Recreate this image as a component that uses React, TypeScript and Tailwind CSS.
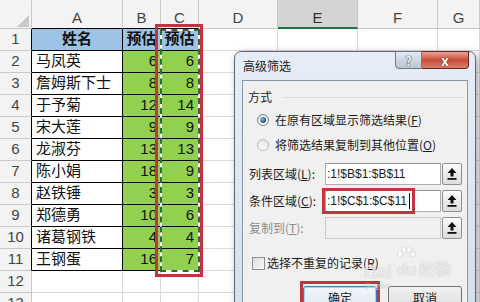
import React from "react";

const names = ["马凤英", "詹姆斯下士", "于予菊", "宋大莲", "龙淑芬", "陈小娟", "赵铁锤", "郑德勇", "诸葛钢铁", "王钢蛋"];
const colB = [6, 8, 12, 9, 13, 18, 3, 10, 4, 16];
const colC = [6, 8, 14, 9, 13, 9, 3, 6, 4, 7];
const letters = ["A", "B", "C", "D", "E", "F", "G"];

const grid = "border-r border-b border-[#dadada] bg-white";
const boxed = "border-r border-b border-black";

function UpButton() {
  return (
    <div className="ml-[1px] flex h-[22px] w-[20px] items-center justify-center rounded-[2px] border border-[#8e8f8f] bg-gradient-to-b from-[#fbfbfb] to-[#dcdcdc]">
      <svg width="10" height="12" viewBox="0 0 10 12">
        <path d="M5 0 L9.5 5 H6.5 V8.5 H3.5 V5 H0.5 Z" fill="#111" />
        <rect x="0.5" y="10" width="9" height="1.8" fill="#111" />
      </svg>
    </div>
  );
}

function Radio({ on }: { on?: boolean }) {
  return (
    <div
      className={
        on
          ? "flex h-[12px] w-[12px] items-center justify-center rounded-full border border-[#7a8088] bg-gradient-to-b from-[#e8e8e8] to-[#fafafa]"
          : "h-[12px] w-[12px] rounded-full border border-[#b5b9be] bg-gradient-to-b from-[#e6e6e6] to-[#fbfbfb]"
      }
    >
      {on && <div className="h-[6px] w-[6px] rounded-full bg-[radial-gradient(circle_at_35%_35%,#8fc0e8,#1f4e7e_70%)]" />}
    </div>
  );
}

export default function App() {
  return (
    <div className="relative h-[302px] w-[480px] overflow-hidden bg-white font-['Liberation_Sans','Noto_Sans_CJK_SC',sans-serif]">
      {/* sheet */}
      <div className="grid grid-cols-[32px_91px_38px_38px_79px_80px_80px_42px] grid-rows-[29px_repeat(13,22px)] text-[15px] text-[#111]">
        <div className="relative border-r border-b border-[#c8c8c8] bg-[#f3f3f3]">
          <svg className="absolute left-[17px] top-[15px]" width="12" height="12" viewBox="0 0 12 12">
            <path d="M12 0 V12 H0 Z" fill="#c9c9c9" />
          </svg>
        </div>
        {letters.map((l) =>
          l === "E" ? (
            <div key={l} className="flex items-end justify-center border-r border-b-2 border-r-[#c8c8c8] border-b-[#217346] bg-[#d4d4d4] pb-[2px] leading-none text-[#333]">
              {l}
            </div>
          ) : (
            <div
              key={l}
              className={
                l === "A" || l === "B" || l === "C"
                  ? "flex items-end justify-center border-r border-b border-r-[#c8c8c8] border-b-black bg-[#f3f3f3] pb-[3px] leading-none text-[#444]"
                  : "flex items-end justify-center border-r border-b border-[#c8c8c8] bg-[#f3f3f3] pb-[3px] leading-none text-[#444]"
              }
            >
              {l}
            </div>
          )
        )}
        {Array.from({ length: 13 }).map((_, i) => {
          const r = i + 1;
          const inTable = r <= 11;
          return (
            <React.Fragment key={r}>
              <div
                className={
                  inTable
                    ? "flex items-center justify-center border-r border-b border-r-black border-b-[#c8c8c8] bg-[#f3f3f3] text-[#444]"
                    : "flex items-center justify-center border-r border-b border-[#c8c8c8] bg-[#f3f3f3] text-[#444]"
                }
              >
                {r}
              </div>
              {r === 1 ? (
                <>
                  <div className={boxed + " flex items-center justify-center bg-[#9dc3e6] font-bold"}>姓名</div>
                  <div className={boxed + " flex items-center justify-center bg-[#9dc3e6] font-bold"}>预估</div>
                  <div className={boxed + " flex items-center justify-center bg-[#9dc3e6] font-bold"}>预估</div>
                </>
              ) : inTable ? (
                <>
                  <div className={boxed + " flex items-center bg-white pl-[4px]"}>{names[r - 2]}</div>
                  <div className={boxed + " flex items-center justify-end bg-[#92d050] pr-[3px]"}>{colB[r - 2]}</div>
                  <div className={boxed + " flex items-center justify-end bg-[#92d050] pr-[4px]"}>{colC[r - 2]}</div>
                </>
              ) : (
                <>
                  <div className={grid} />
                  <div className={grid} />
                  <div className={grid} />
                </>
              )}
              <div className={grid} />
              <div className={grid} />
              <div className={grid} />
              <div className={grid} />
            </React.Fragment>
          );
        })}
      </div>

      {/* copy marquee around C1:C11 */}
      <div className="absolute left-[160px] top-[29px] h-[243px] w-[40px] border-2 border-white" />
      <div className="absolute left-[160px] top-[29px] h-[243px] w-[40px] border-2 border-dashed border-[#2e6b3a]" />
      {/* red annotation around column C */}
      <div className="absolute left-[155px] top-[24px] h-[253px] w-[48px] border-[3px] border-[#c0363e]" />

      {/* dialog */}
      <div className="absolute left-[234px] top-[51px] h-[270px] w-[242px] rounded-t-[7px] border border-[#5d6876] bg-gradient-to-b from-[#e6edf6] to-[#d4dfec] shadow-[3px_3px_10px_rgba(0,0,0,0.35)] font-['Noto_Sans_CJK_SC',sans-serif] text-[12px] text-[#1b1b1b]">
        <div className="flex h-[28px] items-center pl-[8px] pb-[1px]">高级筛选</div>
        <div className="absolute right-[6px] top-[-1px] flex h-[18px]">
          <div className="flex w-[27px] items-center justify-center rounded-bl-[4px] border border-[#6f7b88] bg-gradient-to-b from-[#e2e9f1] to-[#b8c5d3] text-[13px] font-bold leading-none text-[#eef2f6] [text-shadow:0_0_1px_#333,0_0_1px_#333]">
            ?
          </div>
          <div className="flex w-[47px] items-center justify-center rounded-br-[4px] border border-l-0 border-[#6a2a22] bg-gradient-to-b from-[#e6a598] via-[#c94a38] to-[#d98070] text-[14px] font-bold leading-none text-white [text-shadow:0_0_1px_#3a0d08,0_0_1px_#3a0d08]">
            x
          </div>
        </div>

        <div className="absolute bottom-0 left-[7px] right-[7px] top-[28px] flex flex-col border border-[#8796aa] bg-[#f0f0f0]">
          <div className="ml-[5px] mr-[3px] mt-[8px] flex h-4 items-center">
            <span>方式</span>
            <div className="ml-[10px] h-px flex-1 bg-[#d5dde6]" />
          </div>
          <div className="ml-[14px] mt-[7px] flex h-4 items-center gap-[6px]">
            <Radio on />
            <span>
              在原有区域显示筛选结果(<span className="underline">F</span>)
            </span>
          </div>
          <div className="ml-[14px] mt-[9px] flex h-4 items-center gap-[6px]">
            <Radio />
            <span>
              将筛选结果复制到其他位置(<span className="underline">O</span>)
            </span>
          </div>

          <div className="ml-[6px] mt-[10px] flex h-[22px] items-center">
            <span className="w-[76px]">
              列表区域(<span className="underline">L</span>):
            </span>
            <div className="flex h-[22px] w-[116px] items-center border border-[#abadb3] border-t-[#8f9399] bg-white pl-[1px] font-['Liberation_Sans',sans-serif]">
              :1!$B$1:$B$11
            </div>
            <UpButton />
          </div>
          <div className="ml-[6px] mt-[5px] flex h-[22px] items-center">
            <span className="w-[76px]">
              条件区域(<span className="underline">C</span>):
            </span>
            <div className="flex h-[22px] w-[116px] items-center border border-[#abadb3] border-t-[#8f9399] bg-white pl-[1px] font-['Liberation_Sans',sans-serif]">
              :1!$C$1:$C$11
              <div className="ml-[2px] h-[16px] w-px bg-black" />
            </div>
            <UpButton />
          </div>
          <div className="ml-[6px] mt-[5px] flex h-[22px] items-center text-[#8d8d8d]">
            <span className="w-[76px]">
              复制到(<span className="underline">T</span>):
            </span>
            <div className="h-[22px] w-[116px] border border-[#c9cbcf] bg-[#f0f0f0]" />
            <UpButton />
          </div>

          <div className="ml-[9px] mt-[16px] flex h-4 items-center gap-[2px]">
            <div className="h-[13px] w-[13px] border border-[#8e8f8f] bg-gradient-to-br from-[#dcdcdc] to-[#fbfbfb]" />
            <span>
              选择不重复的记录(<span className="underline">R</span>)
            </span>
          </div>

          <div className="ml-[60px] mt-[15px] flex gap-[11px]">
            <div className="flex h-[24px] w-[74px] items-center justify-center rounded-[3px] border border-[#3c7fb1] bg-gradient-to-b from-[#f4f8fb] to-[#d9e6ef] shadow-[inset_0_0_0_1px_#a8d2ee]">
              确定
            </div>
            <div className="flex h-[24px] w-[74px] items-center justify-center rounded-[3px] border border-[#707070] bg-gradient-to-b from-[#f2f2f2] to-[#dcdcdc]">
              取消
            </div>
          </div>
        </div>
      </div>

      {/* red annotations over the dialog */}
      <div className="absolute left-[322px] top-[188px] h-[26px] w-[93px] border-[3px] border-[#c0363e]" />
      <div className="absolute left-[300px] top-[281px] h-[40px] w-[80px] border-[3px] border-[#c0363e]" />

      {/* watermark */}
      <div className="pointer-events-none absolute left-[364px] top-[263px] text-[18px] font-bold leading-none text-white/75 [text-shadow:0_0_1px_rgba(0,0,0,0.3)]">
        Bai
      </div>
      <svg className="pointer-events-none absolute left-[396px] top-[247px]" width="20" height="18" viewBox="0 0 20 18" opacity="0.8">
        <g fill="#fff" stroke="rgba(0,0,0,0.22)" strokeWidth="0.6">
          <ellipse cx="4" cy="7" rx="2.3" ry="3" />
          <ellipse cx="8" cy="3" rx="2.3" ry="3" />
          <ellipse cx="13" cy="3" rx="2.3" ry="3" />
          <ellipse cx="17" cy="7" rx="2.3" ry="3" />
        </g>
      </svg>
      <div className="pointer-events-none absolute left-[397px] top-[262px] text-[16px] font-bold leading-none text-white/75 [text-shadow:0_0_1px_rgba(0,0,0,0.3)]">
        du
      </div>
      <div className="pointer-events-none absolute left-[419px] top-[260px] font-['Noto_Sans_CJK_SC',sans-serif] text-[16px] font-bold leading-none text-white/75 [text-shadow:0_0_1px_rgba(0,0,0,0.3)]">
        经验
      </div>
      <div className="pointer-events-none absolute left-[366px] top-[282px] text-[8px] leading-none text-white/75 [text-shadow:0_0_1px_rgba(0,0,0,0.3)]">
        jingyan
      </div>
    </div>
  );
}
